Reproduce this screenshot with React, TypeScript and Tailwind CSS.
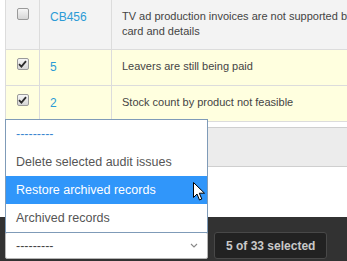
import type { ReactNode } from 'react'

type Row = {
    id: string
    text: ReactNode
    checked: boolean
    height: string
}

const rows: Row[] = [
    {
        id: 'CB456',
        text: (
            <>
                TV ad production invoices are not supported by
                <br />
                card and details
            </>
        ),
        checked: false,
        height: 'h-[50px] bg-[#f3f3f3]',
    },
    { id: '5', text: 'Leavers are still being paid', checked: true, height: 'h-[36px] bg-[#ffffdf]' },
    { id: '2', text: 'Stock count by product not feasible', checked: true, height: 'h-[36px] bg-[#ffffdf]' },
]

const options = ['---------', 'Delete selected audit issues', 'Restore archived records', 'Archived records']

function Checkbox({ checked }: { checked: boolean }) {
    return (
        <div className="w-[12px] h-[12px] rounded-[2px] border border-[#9a9a9a] bg-gradient-to-b from-[#f6f6f6] to-[#d6d6d6] flex items-center justify-center">
            {checked && (
                <svg width="9" height="8" viewBox="0 0 9 8">
                    <path d="M1 4.2 L3.4 6.6 L8 1.2" fill="none" stroke="#2c2c2c" strokeWidth="1.8" />
                </svg>
            )}
        </div>
    )
}

export default function App() {
    return (
        <div
            className="relative w-[347px] h-[261px] overflow-hidden bg-white flex flex-col text-[#444]"
            style={{ fontFamily: '"Liberation Sans", Arial, sans-serif' }}
        >
            {/* table rows */}
            <div className="ml-[5px] w-[400px] border-l border-[#dcdcdc]">
                {rows.map(r => (
                    <div key={r.id} className={`flex border-b border-[#dcdcdc] ${r.height}`}>
                        <div className="w-[34px] shrink-0 border-r border-[#dcdcdc] flex justify-center pt-[8px]">
                            <Checkbox checked={r.checked} />
                        </div>
                        <div className="w-[72px] shrink-0 border-r border-[#dcdcdc] pl-[10px] pt-[10px] text-[12px] leading-[15px] text-[#2b9bd6]">
                            {r.id}
                        </div>
                        <div className="flex-1 pl-[10px] pt-[9px] text-[11px] leading-[15px] text-[#444] whitespace-nowrap">
                            {r.text}
                        </div>
                    </div>
                ))}
            </div>

            {/* gray footer of table */}
            <div className="ml-[5px] mt-[5px] h-[40px] border-y border-[#cfcfcf] bg-[#ececec]" />

            <div className="flex-1" />

            {/* action bar */}
            <div className="h-[44px] bg-[#323232] pl-[5px] pt-[15px] flex items-start gap-[6px]">
                <div className="relative w-[203px]">
                    <div className="absolute bottom-[calc(100%-1px)] left-0 w-[203px] h-[114px] bg-white border border-[#7f9bb8] flex flex-col text-[12.5px] text-[#555]">
                        {options.map((o, i) => (
                            <div
                                key={o}
                                className={`h-[28px] shrink-0 flex items-center pl-[10px] ${
                                    i === 2 ? 'bg-[#3096fa] text-white' : i === 0 ? 'text-[#3a86d0]' : ''
                                }`}
                            >
                                {o}
                            </div>
                        ))}
                    </div>
                    <div className="h-[27px] bg-white border border-[#b5b5b5] rounded-[2px] flex items-center justify-between pl-[10px] pr-[9px] text-[12.5px] text-[#444]">
                        <span className="pt-[2px]">---------</span>
                        <svg width="8" height="5" viewBox="0 0 8 5">
                            <path d="M1 1 L4 4 L7 1" fill="none" stroke="#888" strokeWidth="1.1" />
                        </svg>
                    </div>
                </div>
                <div className="h-[27px] px-[11px] rounded-[3px] bg-[#222] border border-[#484848] flex items-center text-[12px] font-bold text-[#c9c9c9]">
                    5 of 33 selected
                </div>
            </div>

            {/* mouse pointer */}
            <svg className="absolute left-[193px] top-[182px]" width="13" height="19" viewBox="0 0 13 19">
                <path
                    d="M0.5 0.5 L0.5 15.5 L4 12 L6.5 18 L8.8 17 L6.3 11.2 L11.5 11.2 Z"
                    fill="#fff"
                    stroke="#000"
                    strokeWidth="1"
                    strokeLinejoin="miter"
                />
            </svg>
        </div>
    )
}
